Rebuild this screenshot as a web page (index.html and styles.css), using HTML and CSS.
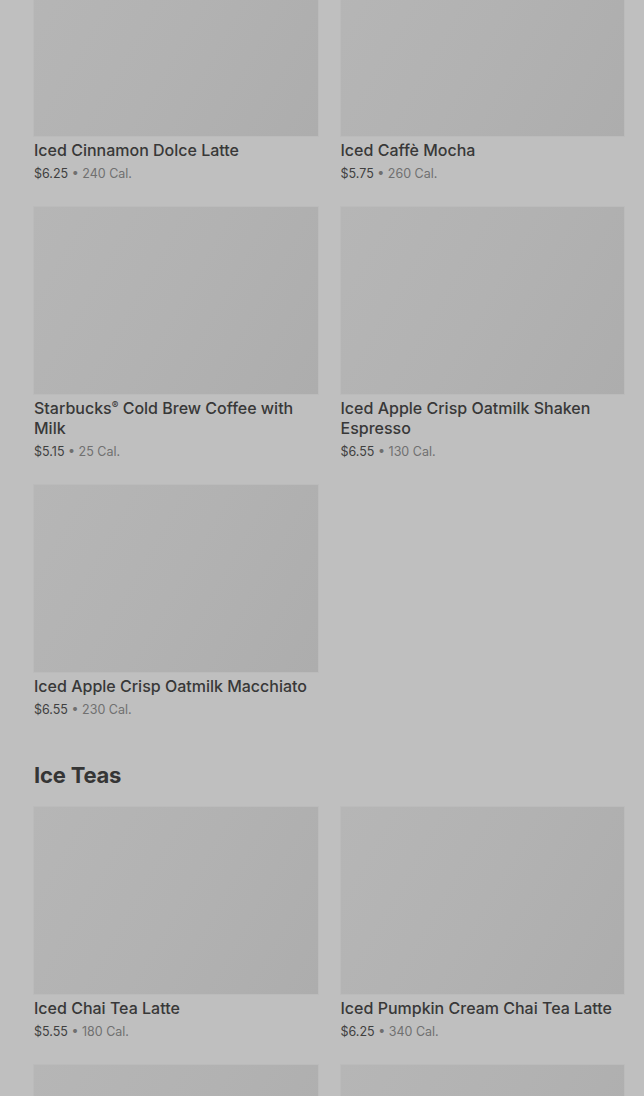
FILE: index.html
```html
<!DOCTYPE html>
<html lang="en">
<head>
    <meta charset="UTF-8">
    <meta name="viewport" content="width=device-width, initial-scale=1.0">
    <title>Menu</title>
    <link rel="stylesheet" href="styles.css">
</head>
<body>
    <main class="menu">
        <section class="menu-section first">
            <div class="product-grid">
                <div class="product">
                    <div class="product-image"></div>
                    <h3 class="product-name">Iced Cinnamon Dolce Latte</h3>
                    <p class="product-meta"><span class="price">$6.25</span> • <span class="cal">240 Cal.</span></p>
                </div>
                <div class="product">
                    <div class="product-image"></div>
                    <h3 class="product-name">Iced Caffè Mocha</h3>
                    <p class="product-meta"><span class="price">$5.75</span> • <span class="cal">260 Cal.</span></p>
                </div>
                <div class="product">
                    <div class="product-image"></div>
                    <h3 class="product-name">Starbucks<span class="reg">®</span> Cold Brew Coffee with Milk</h3>
                    <p class="product-meta"><span class="price">$5.15</span> • <span class="cal">25 Cal.</span></p>
                </div>
                <div class="product">
                    <div class="product-image"></div>
                    <h3 class="product-name">Iced Apple Crisp Oatmilk Shaken Espresso</h3>
                    <p class="product-meta"><span class="price">$6.55</span> • <span class="cal">130 Cal.</span></p>
                </div>
                <div class="product">
                    <div class="product-image"></div>
                    <h3 class="product-name">Iced Apple Crisp Oatmilk Macchiato</h3>
                    <p class="product-meta"><span class="price">$6.55</span> • <span class="cal">230 Cal.</span></p>
                </div>
            </div>
        </section>

        <section class="menu-section">
            <h2 class="section-title">Ice Teas</h2>
            <div class="product-grid">
                <div class="product">
                    <div class="product-image"></div>
                    <h3 class="product-name">Iced Chai Tea Latte</h3>
                    <p class="product-meta"><span class="price">$5.55</span> • <span class="cal">180 Cal.</span></p>
                </div>
                <div class="product">
                    <div class="product-image"></div>
                    <h3 class="product-name">Iced Pumpkin Cream Chai Tea Latte</h3>
                    <p class="product-meta"><span class="price">$6.25</span> • <span class="cal">340 Cal.</span></p>
                </div>
                <div class="product">
                    <div class="product-image"></div>
                    <h3 class="product-name">Iced Black Tea Lemonade</h3>
                    <p class="product-meta"><span class="price">$4.45</span> • <span class="cal">100 Cal.</span></p>
                </div>
                <div class="product">
                    <div class="product-image"></div>
                    <h3 class="product-name">Iced Green Tea</h3>
                    <p class="product-meta"><span class="price">$4.25</span> • <span class="cal">0 Cal.</span></p>
                </div>
            </div>
        </section>
    </main>
</body>
</html>
```

FILE: styles.css
```css
body {
    margin: 0;
    overflow: hidden;
    background-color: #bfbfbf;
    font-family: 'Inter', 'Noto Sans', sans-serif;
    color: #383838;
}

.menu {
    padding: 0 20px 0 34px;
}

/* 最初のセクションは途中までスクロールされた状態 */
.menu-section.first {
    margin-top: -51px;
}

.section-title {
    margin: 39px 0 16px;
    font-size: 22px;
    line-height: 32px;
    font-weight: 700;
    letter-spacing: -0.2px;
    color: #353535;
}

.product-grid {
    display: grid;
    grid-template-columns: 1fr 1fr;
    column-gap: 23px;
    row-gap: 23px;
}

.product-image {
    height: 187px;
    background: linear-gradient(120deg, #b6b6b6 0%, #b2b2b2 50%, #adadad 100%);
    box-shadow: 0 0 0 1px #bbbbbb;
}

.product-name {
    margin: 4px 0 0;
    font-size: 16px;
    line-height: 20px;
    font-weight: 500;
    color: #383838;
}

.product-name .reg {
    font-size: 10px;
    line-height: 0;
    vertical-align: 5px;
}

.product-meta {
    margin: 4px 0 0;
    font-size: 12.5px;
    line-height: 20px;
    color: #6f6f6f;
}

.product-meta .price {
    color: #404040;
}

.product-meta .cal {
    color: #707070;
}
```
